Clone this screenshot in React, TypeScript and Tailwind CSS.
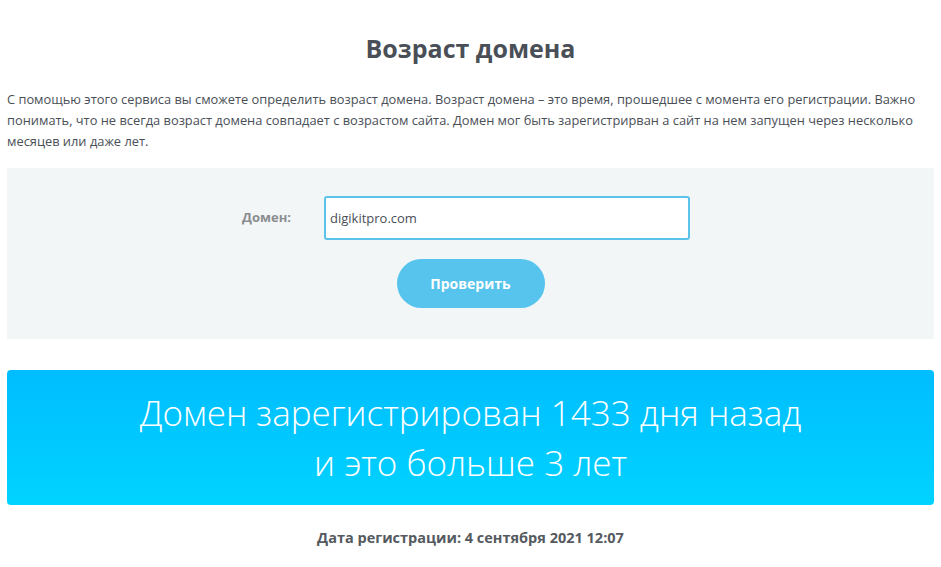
import React, { useState } from 'react';

export default function App() {
  const [domain, setDomain] = useState('digikitpro.com');

  return (
    <div className="min-h-[567px] bg-white px-[7px] pt-[30px] font-['Open_Sans',sans-serif] text-[#4a4f57]">
      {/* Title */}
      <h1 className="text-center text-[25px] font-bold leading-[36px] text-[#4a4f57]">Возраст домена</h1>

      {/* Intro */}
      <p className="mt-[23px] text-[12.85px] leading-[21px] text-[#4a4f57]">
        С помощью этого сервиса вы сможете определить возраст домена. Возраст домена – это время, прошедшее с момента его
        регистрации. Важно понимать, что не всегда возраст домена совпадает с возрастом сайта. Домен мог быть
        зарегистрирван а сайт на нем запущен через несколько месяцев или даже лет.
      </p>

      {/* Form */}
      <div className="mt-[16px] flex h-[171px] flex-col items-center bg-[#f3f6f7] pt-[28px]">
        <div className="mr-[9px] flex items-center">
          <label className="w-[82px] text-[13px] font-bold text-[#8a8d90]">Домен:</label>
          <input
            value={domain}
            onChange={(e) => setDomain(e.target.value)}
            className="h-[44px] w-[366px] rounded-[3px] border-2 border-[#5bc2ea] bg-white px-[4px] text-[13px] text-[#4a4f57] outline-none"
          />
        </div>
        <button className="mt-[19px] h-[49px] w-[148px] rounded-full bg-[#56c4ec] text-[14px] font-bold text-white">
          Проверить
        </button>
      </div>

      {/* Result */}
      <div className="mt-[31px] flex h-[135px] flex-col items-center justify-center rounded-[4px] bg-gradient-to-b from-[#00bdff] to-[#00d3ff] text-[35px] font-light leading-[50px] text-white">
        <div>Домен зарегистрирован 1433 дня назад</div>
        <div>и это больше 3 лет</div>
      </div>

      <div className="mt-[22px] text-center text-[14.5px] font-bold text-[#555a60]">
        Дата регистрации: 4 сентября 2021 12:07
      </div>
    </div>
  );
}
